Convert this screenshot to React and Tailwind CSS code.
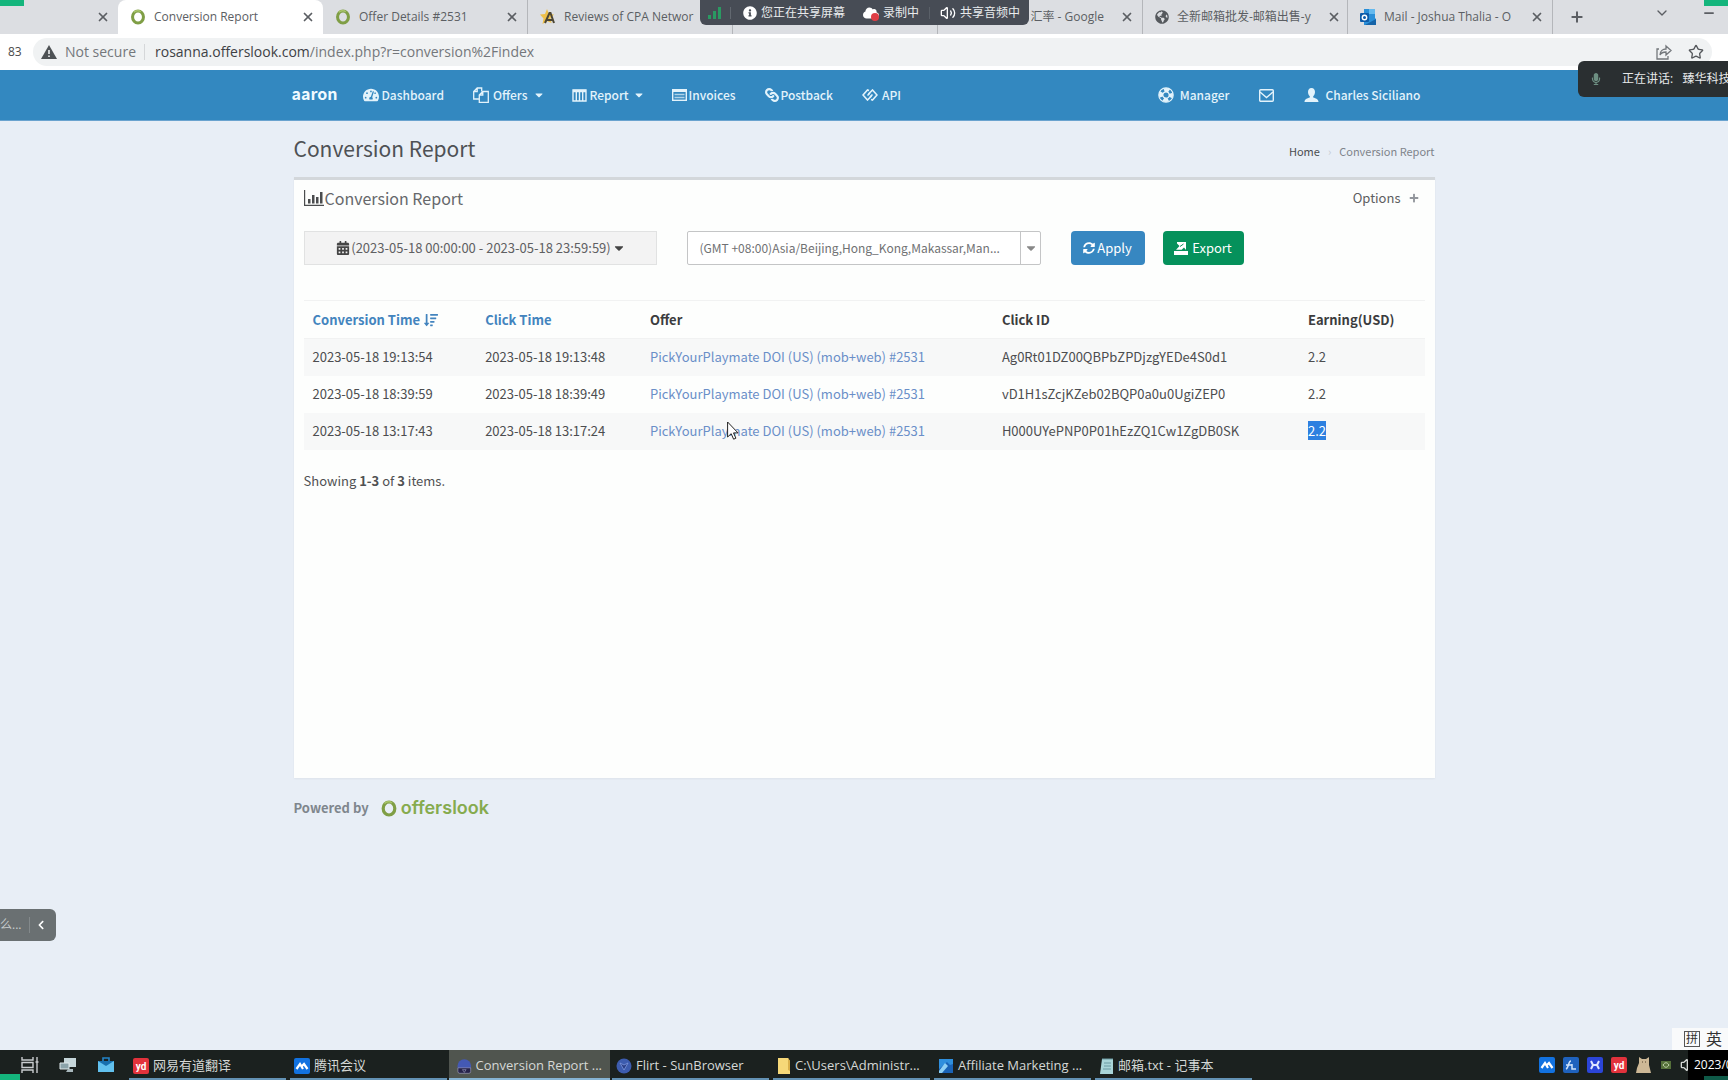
import React from "react";
import {
  FaTachometerAlt,
  FaCaretDown,
  FaLink,
  FaPlus,
  FaSyncAlt,
  FaCalendarAlt,
  FaSortAmountDown,
  FaGlobeAmericas,
  FaMicrophone,
  FaInfoCircle,
  FaCloud,
  FaChevronLeft,
} from "react-icons/fa";
import { LuX, LuPlus, LuChevronDown, LuMinus, LuStar, LuVolume2 } from "react-icons/lu";

const tabs = [
  { name: "Conversion Report", icon: "ring", active: true },
  { name: "Offer Details #2531", icon: "ring" },
  { name: "Reviews of CPA Networ", icon: "review" },
  { name: "", icon: "none" },
  { name: "汇率 - Google", icon: "none", alignRight: true },
  { name: "全新邮箱批发-邮箱出售-y", icon: "globe" },
  { name: "Mail - Joshua Thalia - O", icon: "outlook" },
];

const rows = [
  { conversion: "2023-05-18 19:13:54", click: "2023-05-18 19:13:48", id: "Ag0Rt01DZ00QBPbZPDjzgYEDe4S0d1" },
  { conversion: "2023-05-18 18:39:59", click: "2023-05-18 18:39:49", id: "vD1H1sZcjKZeb02BQP0a0u0UgiZEP0" },
  { conversion: "2023-05-18 13:17:43", click: "2023-05-18 13:17:24", id: "H000UYePNP0P01hEzZQ1Cw1ZgDB0SK", selected: true },
];

const tasks = [
  { name: "网易有道翻译", icon: "youdao" },
  { name: "腾讯会议", icon: "meeting" },
  { name: "Conversion Report ...", icon: "sun", active: true },
  { name: "Flirt - SunBrowser", icon: "sunBlue" },
  { name: "C:\\Users\\Administr...", icon: "folder" },
  { name: "Affiliate Marketing ...", icon: "photo" },
  { name: "邮箱.txt - 记事本", icon: "notepad" },
];

function Ring({ className }) {
  return (
    <svg viewBox="0 0 16 17" className={className} fill="none">
      <ellipse cx="8" cy="8.500" rx="5.800" ry="6.500" stroke="#7f9e45" strokeWidth="3.200" />
      <path d="M3.500 3.500C5 1.600 9 1.200 11 3" stroke="#a9c46c" strokeWidth="1.500" />
    </svg>
  );
}

function TabIcon({ icon }) {
  if (icon === "ring") return <Ring className="size-4 shrink-0" />;
  if (icon === "globe") return <FaGlobeAmericas className="size-3.5 shrink-0 text-[#55595d]" />;
  if (icon === "review")
    return (
      <svg viewBox="0 0 16 16" className="size-4 shrink-0">
        <path d="M7 0l2 5 5 .5-3.500 3.500 1 5L7 12l-4.500 3 1-5.500L0 5.500 5 5z" fill="#eec04a" />
        <path d="M5 14L9.500 4h1L14 14M7 11h6" fill="none" stroke="#4b4534" strokeWidth="2" />
      </svg>
    );
  if (icon === "outlook")
    return (
      <svg viewBox="0 0 16 16" className="size-4 shrink-0">
        <path d="M4 0h11v9l1 1v6H4z" fill="#2a8fd8" />
        <path d="M9 0h6v5H9z" fill="#64b9ee" />
        <path d="M5 16l11-6v6z" fill="#1664a8" />
        <rect y="4" width="9" height="9" rx="1" fill="#0f5ca8" />
        <circle cx="4.500" cy="8.500" r="2.200" fill="none" stroke="#fff" strokeWidth="1.400" />
      </svg>
    );
  return null;
}

function BrowserTabs() {
  return (
    <div className="flex h-[34px] items-stretch overflow-hidden bg-[#dcdee2] text-[#5b5e63]">
      <div className="flex w-[118px] shrink-0 items-center justify-end pr-2">
        <button aria-label="Close tab"><LuX className="size-3.5" strokeWidth={3} /></button>
      </div>
      {tabs.map((tab, i) => (
        <div
          key={i}
          className={
            tab.active
              ? "flex w-[205px] shrink-0 items-center gap-2 rounded-t-lg bg-white pl-3 pr-2"
              : "flex w-[205px] shrink-0 items-center gap-2 border-r border-[#b4b6ba] pl-3 pr-2"
          }
        >
          <TabIcon icon={tab.icon} />
          <span
            className={
              tab.alignRight
                ? "flex-1 text-right text-xs whitespace-nowrap"
                : "flex-1 text-xs whitespace-nowrap"
            }
          >
            {tab.name}
          </span>
          <button aria-label="Close tab" className="pl-2"><LuX className="size-3.5" strokeWidth={3} /></button>
        </div>
      ))}
      <button aria-label="New tab" className="px-4"><LuPlus className="size-4" strokeWidth={3} /></button>
      <div className="ml-auto flex shrink-0 items-center gap-8 pr-3 pb-2">
        <button aria-label="Search tabs"><LuChevronDown className="size-4" /></button>
        <button aria-label="Minimize"><LuMinus className="size-3.5" strokeWidth={3} /></button>
      </div>
    </div>
  );
}

function AddressBar() {
  return (
    <div className="flex h-9 items-center bg-white pr-4 pl-2 text-sm text-[#74777b]">
      <span className="w-[25px] text-xs text-[#4a4a4a]">83</span>
      <div className="flex h-7 flex-1 items-center rounded-full bg-[#f0f2f3] pr-2 pl-2">
        <svg viewBox="0 0 16 14" className="mr-2 h-3.5 w-4">
          <path d="M8 0l8 14H0z" fill="#4e5255" />
          <path d="M8 5v4M8 10.500v1.500" stroke="#f0f2f3" strokeWidth="1.600" />
        </svg>
        <span className="mr-2.5 border-r border-[#d5d7d9] pr-2 leading-4">Not secure</span>
        <span className="flex-1"><span className="text-[#3e4145]">rosanna.offerslook.com</span>/index.php?r=conversion%2Findex</span>
        <button aria-label="Share" className="mr-4">
          <svg viewBox="0 0 16 16" className="size-4" fill="none" stroke="#73777b" strokeWidth="1.300">
            <path d="M3 5H1v10h11v-3M4 11c0-4 3-6 6-6V2l5 4.500L10 11V8c-3 0-5 1-6 3z" />
          </svg>
        </button>
        <button aria-label="Bookmark"><LuStar className="size-4 text-[#55585c]" /></button>
      </div>
    </div>
  );
}

function NavBar() {
  return (
    <header className="border-b border-[#6aa3cf] bg-[#3388c0] text-xs font-medium text-[#e3f3fb]">
      <nav className="mx-auto flex h-[50px] max-w-[1145px] items-center pr-4">
        <a href="#" className="mr-[26px] pb-1 text-base font-bold text-[#f0faff]">aaron</a>
        <div className="flex items-center gap-[29px]">
          <a href="#" className="flex items-center gap-0.5"><FaTachometerAlt className="size-4" />Dashboard</a>
          <a href="#" className="flex items-center gap-1">
            <svg viewBox="0 0 16 16" className="size-4" fill="none" stroke="currentColor" strokeWidth="1.300">
              <path d="M6 12H.7V4.500L4.200 1h4.500v3.500M.7 4.500h3.500V1" />
              <path d="M6.300 8l3.500-3.500h5.500v10.800h-9zM6.300 8h3.500V4.500" />
            </svg>
            Offers<FaCaretDown className="ml-1 h-3 w-2" />
          </a>
          <a href="#" className="flex items-center gap-0.5">
            <svg viewBox="0 0 15 13" className="h-[13px] w-[15px]" fill="none" stroke="currentColor">
              <path d="M1 1h13v11H1z" strokeWidth="1.400" />
              <path d="M1 2h13" strokeWidth="2.500" />
              <path d="M4.300 3v9M7.500 3v9M10.700 3v9" strokeWidth="1.400" />
            </svg>
            Report<FaCaretDown className="ml-1 h-3 w-2" />
          </a>
          <a href="#" className="flex items-center gap-0.5">
            <svg viewBox="0 0 15 12" className="h-3 w-[15px]" fill="none" stroke="currentColor">
              <rect x=".7" y=".7" width="13.600" height="10.600" strokeWidth="1.400" />
              <path d="M1 2h13" strokeWidth="2" />
              <path d="M2.500 5.500h10M2.500 8.500h10" strokeWidth="1.600" opacity=".7" />
            </svg>
            Invoices
          </a>
          <a href="#" className="flex items-center gap-0.5"><FaLink className="size-3.5 rotate-90" />Postback</a>
          <a href="#" className="flex items-center gap-1">
            <svg viewBox="0 0 16 12" className="h-3 w-4" fill="none" stroke="currentColor" strokeWidth="1.600">
              <path d="M7 1.500L5.500 1 1 6l4.500 5 4-4M9 10.500l1.500.5L15 6l-4.500-5-4 4" />
              <path d="M5.500 6.500L8 4M8 8l2.500-2.500" />
            </svg>
            API
          </a>
        </div>
        <div className="ml-auto flex items-center gap-[30px]">
          <a href="#" className="flex items-center gap-1.5">
            <svg viewBox="0 0 16 16" className="size-4" fill="none" stroke="currentColor">
              <circle cx="8" cy="8" r="5" strokeWidth="4" strokeDasharray="5 2.854" strokeDashoffset="2.500" />
              <circle cx="8" cy="8" r="7.200" strokeWidth="1.200" />
              <circle cx="8" cy="8" r="3.200" strokeWidth="1.200" />
            </svg>
            Manager
          </a>
          <a href="#" aria-label="Messages">
            <svg viewBox="0 0 15 13" className="h-[13px] w-[15px]" fill="none" stroke="currentColor" strokeWidth="1.400">
              <rect x=".7" y=".7" width="13.600" height="11.600" rx="1" />
              <path d="M1 3l6.500 5.500L14 3" />
            </svg>
          </a>
          <a href="#" className="flex items-center gap-1.5">
            <svg viewBox="0 0 15 14" className="h-3.5 w-[15px]" fill="currentColor">
              <path d="M7.500 0c2.400 0 3.500 1.700 3.500 4 0 1.800-.8 3.400-1.800 4.200v1.200c2.600.9 5.300 1.600 5.300 4.600H.5c0-3 2.700-3.700 5.300-4.600V8.200C4.800 7.400 4 5.800 4 4c0-2.300 1.100-4 3.500-4z" />
            </svg>
            Charles Siciliano
          </a>
        </div>
      </nav>
    </header>
  );
}

function Filters() {
  return (
    <div className="mt-[15px] flex items-center text-[13px] text-[#5f6062]">
      <button className="flex h-[34px] w-[353px] items-center justify-center gap-px border border-[#e1e2e2] bg-[#f3f3f3]">
        <FaCalendarAlt className="size-3.5 text-[#444]" />
        (2023-05-18 00:00:00 - 2023-05-18 23:59:59)
        <FaCaretDown className="ml-0.5 h-3.5 w-2.5 text-[#444]" />
      </button>
      <div className="relative ml-[30px] w-[354px]">
        <select
          aria-label="Time zone"
          className="h-[34px] w-full appearance-none rounded-xs border border-[#c4c5c6] bg-white pr-6 pl-3 text-xs text-[#707173]"
        >
          <option>(GMT +08:00)Asia/Beijing,Hong_Kong,Makassar,Man...</option>
        </select>
        <span className="pointer-events-none absolute inset-y-0 right-0 flex w-[21px] items-center justify-center border-l border-[#c4c5c6]">
          <FaCaretDown className="size-3.5 text-[#888]" />
        </span>
      </div>
      <button className="ml-[30px] flex h-[34px] w-[74px] items-center justify-center gap-0.5 rounded-sm bg-[#3787c1] text-white">
        <FaSyncAlt className="size-3" />Apply
      </button>
      <button className="ml-[18px] flex h-[34px] w-[81px] items-center justify-center gap-1 rounded-sm bg-[#05915b] text-white">
        <svg viewBox="0 0 14 14" className="size-3.5" fill="currentColor">
          <path d="M0 10h14v4H0zM2 8.800L5.500 5 3 2.500V1h9v8l-2-2.500-2.300 2.300z" />
          <path d="M6 5.500L9.500 3" stroke="#05915b" strokeWidth="1" />
        </svg>
        Export
      </button>
    </div>
  );
}

function ReportTable() {
  return (
    <table className="mt-[35px] w-full table-fixed border-collapse text-left text-[13px] leading-5 text-[#4c4d4f]">
      <thead>
        <tr className="h-[38px] border-y border-[#f1f2f2] text-[#3b3c3e]">
          <th className="w-[15.4%] px-[9px] font-bold">
            <a href="#" className="flex items-center gap-1 text-[#4384be]">
              Conversion Time <FaSortAmountDown className="size-3.5" />
            </a>
          </th>
          <th className="w-[14.7%] px-[9px] font-bold"><a href="#" className="text-[#4384be]">Click Time</a></th>
          <th className="w-[31.4%] px-[9px] font-bold">Offer</th>
          <th className="w-[27.3%] px-[9px] font-bold">Click ID</th>
          <th className="px-[9px] font-bold">Earning(USD)</th>
        </tr>
      </thead>
      <tbody>
        {rows.map((row) => (
          <tr key={row.id} className="h-[37px] odd:bg-[#f7f8f8]">
            <td className="px-[9px]">{row.conversion}</td>
            <td className="px-[9px]">{row.click}</td>
            <td className="px-[9px]">
              <span className="relative">
                <a href="#" className="text-[#6a8fc8]">PickYourPlaymate DOI (US) (mob+web) #2531</a>
                {row.selected && (
                  <svg viewBox="0 0 12 19" className="absolute top-0 left-[77px] h-[19px] w-3">
                    <path d="M.6 1v15l3.600-3.300 2.400 5.500 2.300-1-2.400-5.300H11z" fill="#fff" stroke="#222" strokeWidth="1" />
                  </svg>
                )}
              </span>
            </td>
            <td className="px-[9px]">{row.id}</td>
            <td className="px-[9px]">
              <span className={row.selected ? "bg-[#2d80e0] text-white" : ""}>2.2</span>
            </td>
          </tr>
        ))}
      </tbody>
    </table>
  );
}

function TaskIcon({ icon }) {
  if (icon === "youdao")
    return <span className="flex size-4 items-center justify-center rounded-xs bg-[#e2323c] font-[Roboto] text-[10px] font-bold text-white">yd</span>;
  if (icon === "meeting")
    return (
      <svg viewBox="0 0 16 16" className="size-4">
        <rect width="16" height="16" rx="2" fill="#1272e0" />
        <path d="M2.500 11L6 6l3 5M7.500 8.500L10 6l3.500 5" fill="none" stroke="#fff" strokeWidth="2.200" />
      </svg>
    );
  if (icon === "sun" || icon === "sunBlue")
    return (
      <svg viewBox="0 0 16 16" className="size-4">
        <circle cx="8" cy="8" r="7.500" fill={icon === "sun" ? "#4459b4" : "#3d5cae"} />
        {icon === "sun" ? (
          <path d="M1 10h14v4a2 2 0 01-2 2H3a2 2 0 01-2-2zM6 12h4l-2 3z" fill="#26234a" stroke="#c8c8e8" strokeWidth=".5" />
        ) : (
          <path d="M4 5l4 7 4-7-4 2z" fill="#2a3f86" stroke="#7d97dd" strokeWidth=".8" />
        )}
      </svg>
    );
  if (icon === "folder")
    return (
      <svg viewBox="0 0 14 16" className="h-4 w-3.5">
        <path d="M1 0h10l2 3v13H1z" fill="#f6d878" />
        <path d="M11 0l2 3v10l-2-1z" fill="#d9b04c" />
      </svg>
    );
  if (icon === "photo")
    return (
      <svg viewBox="0 0 16 16" className="size-4">
        <path d="M1 1h14v14H1z" fill="#1a63b6" />
        <path d="M1 1h14v5l-3 1-3-3-8 7z" fill="#2f8fdd" />
        <path d="M1 13l6-8 3 3-6 7H1z" fill="#8ed0f4" />
      </svg>
    );
  return (
    <svg viewBox="0 0 15 16" className="h-4 w-[15px]">
      <path d="M3 1h11v15H1z" fill="#a9d5d8" />
      <path d="M3 1h11M5 5h7M5 8h7M4 11h8" stroke="#6b9aa2" strokeWidth="1" />
    </svg>
  );
}

function Taskbar() {
  return (
    <footer className="relative flex h-[30px] items-stretch overflow-hidden bg-[#1b211f] text-[13px] text-[#d5d8d6]">
      <div className="flex w-[127px] shrink-0 items-center gap-5 pl-[21px]">
        <svg viewBox="0 0 18 16" className="h-4 w-[18px]" fill="none" stroke="#c9cdcf" strokeWidth="1.400">
          <path d="M1 0v3h11V0M1 16v-3h11v3M1 5.500h11v5H1zM16 0v16M14.500 5h3" />
        </svg>
        <svg viewBox="0 0 18 16" className="h-4 w-[18px]">
          <path d="M5 1h12v9H5z" fill="#c6d6da" />
          <path d="M1 6h9v6H1z" fill="#8ba3aa" stroke="#dfe8ea" strokeWidth="1" />
          <path d="M9 12h5v3H7z" fill="#a9b9bd" />
        </svg>
        <svg viewBox="0 0 18 16" className="h-4 w-[18px]">
          <path d="M6 4V1h6v3" fill="none" stroke="#2384c8" strokeWidth="1.600" />
          <path d="M1 4h16v11H1z" fill="#62c1ee" />
          <path d="M1 4h16L9 9z" fill="#176fae" />
        </svg>
      </div>
      {tasks.map((task) => (
        <button
          key={task.name}
          className={
            task.active
              ? "flex w-[161px] shrink-0 items-center gap-1 border-b-2 border-[#86b4d4] bg-[#50554f] px-2 pt-1"
              : "mx-0.5 flex w-[157px] shrink-0 items-center gap-1 border-b-2 border-[#6392b4] px-1 pt-1"
          }
        >
          <TaskIcon icon={task.icon} />
          <span className="whitespace-nowrap">{task.name}</span>
        </button>
      ))}
      <div className="ml-auto flex shrink-0 items-center gap-2">
        <TaskIcon icon="meeting" />
        <svg viewBox="0 0 16 16" className="size-4">
          <rect width="16" height="16" rx="2" fill="#1f62bd" />
          <path d="M3 12c3-1 2-8 5-8M3 8h6M9 7v5h4" fill="none" stroke="#cfe2fa" strokeWidth="1.500" />
        </svg>
        <svg viewBox="0 0 16 16" className="size-4">
          <rect width="16" height="16" rx="2" fill="#2b45d8" />
          <path d="M4 4l2 4-2 4M12 4l-2 4 2 4M6 8h4" fill="none" stroke="#dfe5ff" strokeWidth="2" />
        </svg>
        <TaskIcon icon="youdao" />
        <svg viewBox="0 0 17 16" className="h-4 w-[17px]">
          <path d="M4 6V0l3 2h4l3-2v8l2 8H1l1-5z" fill="#cdb896" />
          <path d="M7 5h1M10 5h1" stroke="#54452e" />
        </svg>
        <svg viewBox="0 0 12 10" className="h-2.5 w-3">
          <path d="M1 1h10v8H1z" fill="#55703a" />
          <path d="M3 5c2-3 4-3 6 0-2 3-4 3-6 0z" fill="none" stroke="#c5d6ae" />
        </svg>
        <LuVolume2 className="-mr-4 size-4" />
        <span className="relative flex h-full w-10 items-center overflow-hidden bg-black pl-1.5 text-xs whitespace-nowrap text-white">2023/0</span>
      </div>
      <span className="absolute bottom-0 left-0 h-1.5 w-5 bg-[#14b57c]" />
      <span className="absolute right-0 bottom-0 h-1 w-6 bg-[#0f5a48]" />
    </footer>
  );
}

export default function App() {
  return (
    <div className="relative flex min-h-screen flex-col overflow-hidden bg-[#e8eef6] font-['Open_Sans','Noto_Sans_CJK_SC',sans-serif]">
      <BrowserTabs />
      <AddressBar />
      <div className="flex flex-1 flex-col font-['Noto_Sans_CJK_SC',sans-serif]">
        <NavBar />
        <main className="mx-auto w-full max-w-[1141px] flex-1">
          <div className="flex h-14 items-center justify-between">
            <h1 className="text-[21px] text-[#4e5155]">Conversion Report</h1>
            <div className="flex items-center gap-2 pt-1 text-[11px]">
              <a href="#" className="text-[#4b4d50]">Home</a>
              <span className="text-[#c5cad2]">›</span>
              <span className="text-[#7f848b]">Conversion Report</span>
            </div>
          </div>
          <section className="min-h-[601px] border-t-[3px] border-[#d3d7db] bg-[#fdfefd] px-2.5 shadow-xs">
            <div className="flex h-9 items-center justify-between pr-1.5">
              <h2 className="flex items-center gap-px text-base text-[#66686b]">
                <svg viewBox="0 0 20 16" className="h-4 w-5" fill="#4a4c4e">
                  <path d="M0 0h1.200v14.800H20V16H0zM4 9h2.500v4.500H4zM8 5h2.500v8.500H8zM12 7h2.500v6.500H12zM16 2h2.500v11.500H16z" />
                </svg>
                Conversion Report
              </h2>
              <button className="flex items-center gap-2 text-[13px] text-[#5c5d60]">
                Options <FaPlus className="size-2.5 text-[#92969c]" />
              </button>
            </div>
            <Filters />
            <ReportTable />
            <p className="mt-[21px] text-[13px] leading-5 text-[#505153]">
              Showing <b>1-3</b> of <b>3</b> items.
            </p>
          </section>
          <div className="flex items-center gap-3 pt-4 text-[13px] font-bold text-[#7f868d]">
            Powered by
            <a href="#" className="flex items-center gap-1 font-['Inter',sans-serif] text-lg leading-7 font-semibold text-[#86ab4e]">
              <Ring className="h-[17px] w-4" />
              offerslook
            </a>
          </div>
        </main>
      </div>
      <Taskbar />

      {/* meeting controls */}
      <div className="absolute top-0 left-[700px] flex h-[25px] w-[329px] items-center rounded-b-md bg-[#474c55] px-2 text-xs text-[#e9ebed]">
        <svg viewBox="0 0 14 12" className="h-3 w-3.5" fill="#2a9a62">
          <path d="M0 8h3v4H0zM5 4h3v8H5zM10 0h3v12h-3z" />
        </svg>
        <span className="mx-2 h-3 w-px bg-[#626870]" />
        <FaInfoCircle className="mr-1 ml-1 size-3.5 text-white" />
        您正在共享屏幕
        <span className="relative mr-1 ml-[18px]">
          <FaCloud className="size-4 text-white" />
          <span className="absolute right-0 bottom-0 size-2 rounded-full bg-[#df3d45]" />
        </span>
        录制中
        <span className="mx-2.5 h-3 w-px bg-[#5a6068]" />
        <LuVolume2 className="mr-1 size-4 text-white" />
        共享音频中
      </div>
      <div className="absolute top-[61px] right-0 flex h-9 w-[150px] items-center gap-5 overflow-hidden rounded-l-md bg-[#2a2f31] pl-3 text-xs whitespace-nowrap text-[#e6e8e9]">
        <FaMicrophone className="size-3 shrink-0 text-[#6d8f82]" />
        <span>正在讲话:&nbsp;&nbsp; 臻华科技</span>
      </div>
      <div className="absolute bottom-[139px] left-0 flex h-8 w-14 items-center justify-between rounded-r-md bg-[#6a7072] pr-2.5 text-xs text-[#c9cdce]">
        <span className="w-[22px] whitespace-nowrap">么...</span>
        <span className="h-4 w-px bg-[#83898b]" />
        <FaChevronLeft className="size-2.5 text-white" />
      </div>
      <div className="absolute right-0 bottom-[30px] flex h-[22px] items-center gap-1.5 bg-[#f9fafb] pr-1.5 pl-3 text-base leading-none text-[#333]">
        <span className="flex size-4 items-center justify-center border border-[#555] text-xs">拼</span>英
      </div>
      <span className="absolute top-0 left-0 h-1.5 w-6 bg-[#14b57c]" />
      <span className="absolute top-0 right-0 h-1.5 w-6 bg-[#14b57c]" />
    </div>
  );
}
